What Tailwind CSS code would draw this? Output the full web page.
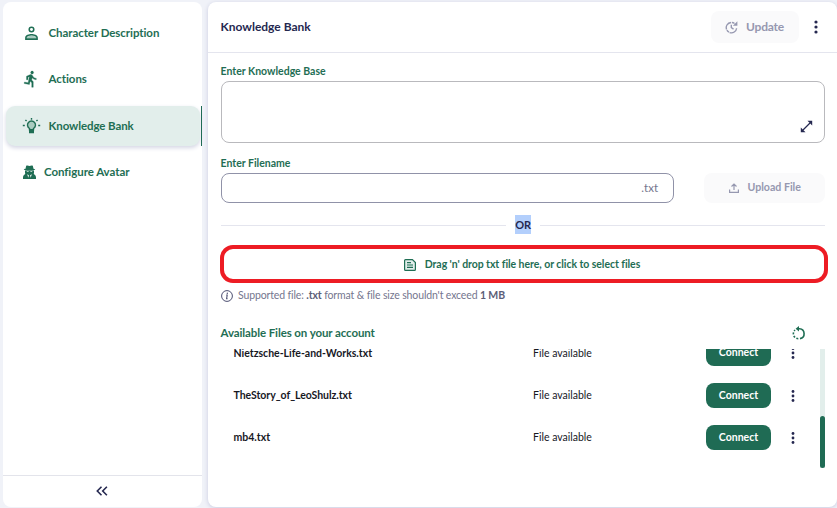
<!DOCTYPE html>
<html lang="en">
<head>
<meta charset="utf-8">
<title>Knowledge Bank</title>
<script src="https://cdn.jsdelivr.net/npm/@tailwindcss/browser@4"></script>
</head>
<body class="w-[837px] h-[508px] overflow-hidden bg-[#f0f2f8] font-['Lato',sans-serif] text-[#252850]">
<div class="flex h-[507px] gap-[6px] pt-[2px] pl-[3px]">
  <aside class="flex w-[199px] shrink-0 flex-col rounded-[8px] bg-white text-[11.5px] font-bold tracking-[-0.06px] text-[#1f6e54]">
    <nav class="flex flex-1 flex-col pt-[11px]">
      <a class="flex h-[40px] items-center pl-[20px]">
        <svg class="mr-[8.500px] size-[17px]" viewBox="0 0 24 24"><path fill="#a9cbbf" d="M5 18c0-2 4-3 7-3s7 1 7 3v1H5z"/><path fill="currentColor" d="M12 4.2a2 2 0 1 1 0 4.2 2 2 0 0 1 0-4.2M12 2a4.3 4.3 0 1 0 0 8.6A4.3 4.3 0 0 0 12 2m0 10.7c-3.3 0-9 1.5-9 5.2V21h18v-3.100c0-3.700-5.700-5.200-9-5.200m0 2.200c3 0 6.500 1.300 6.800 3.100v.8H5.200V18c.3-1.800 3.800-3.100 6.800-3.100"/></svg>Character Description</a>
      <a class="mt-[6px] flex h-[40px] items-center pl-[19px]">
        <svg class="mr-[8.500px] size-[18px]" viewBox="0 0 24 24" fill="currentColor" stroke="currentColor" stroke-width=".4"><path d="M13.49 5.48c1.1 0 2-.9 2-2s-.9-2-2-2-2 .9-2 2 .9 2 2 2zm-3.6 13.9l1-4.4 2.1 2v6h2v-7.500l-2.100-2 .6-3c1.300 1.500 3.300 2.500 5.500 2.500v-2c-1.900 0-3.500-1-4.300-2.400l-1-1.600c-.4-.6-1-1-1.700-1-.3 0-.5.1-.8.1l-5.200 2.200v4.700h2v-3.400l1.800-.7-1.600 8.100-4.900-1-.4 2 7 1.400z"/></svg>Actions</a>
      <div class="mt-[7px] flex h-[40px] justify-between">
        <a class="ml-[3px] flex w-[194px] items-center rounded-[9px] bg-[#e2eeeb] pl-[16px] shadow-[0_2px_4px_#d4d6e4]">
          <svg class="mr-[7.500px] size-[19px]" viewBox="0 0 19 19" fill="none" stroke="currentColor" stroke-width="1.400"><path fill="#a9cbbf" d="M7.500 12.800v-1.300a4 4 0 1 1 4 0v1.300z"/><path fill="currentColor" d="M7.700 13.500h3.600v2H7.700z"/><path d="M9.500 1v1.700M3.400 2.900l1.200 1.200M15.600 2.900l-1.200 1.200M.8 8.500h2M16.200 8.500h2"/></svg><span class="tracking-[-0.1px]">Knowledge Bank</span></a>
        <i class="w-[1px] bg-[#1f6b56]"></i>
      </div>
      <a class="mt-[6px] flex h-[40px] items-center pl-[20px]">
        <svg class="mr-[8px] h-[14px] w-[13px]" viewBox="0 0 13 14" fill="currentColor"><path d="M3.200.8C4.500-.2 5.500.9 6.500.9s2-1.100 3.300-.1l.7 2.900c1 .2 1.700.5 1.700.8 0 .5-2.500 1-5.700 1S.8 5 .8 4.500c0-.3.700-.6 1.700-.8z"/><path fill-rule="evenodd" d="M2 5.400h9v2.200c0 .5-.1.900-.3 1.300C12.300 9.600 13 11 13 12.600V14H0v-1.400c0-1.600.7-3 2.300-3.700-.2-.4-.3-.8-.3-1.300zM3.800 6.300v.7l1.800.1.300-.5zM9.200 6.300v.7l-1.800.1-.3-.5zM4.200 9.200l1.100 3.500.6-2.500zM8.800 9.200l-1.100 3.500-.6-2.500z"/></svg>Configure Avatar</a>
    </nav>
    <button class="flex h-[32px] items-center justify-center border-t border-[#e3e4eb] pr-[1px] pb-[1px] text-[#252850]">
      <svg class="h-[10px] w-[12px]" viewBox="0 0 12 10" fill="none" stroke="currentColor" stroke-width="1.600"><path d="M5.500.8 1.300 5l4.200 4.200M10.900.8 6.700 5l4.200 4.200"/></svg>
    </button>
  </aside>

  <main class="flex w-[629px] shrink-0 flex-col rounded-[8px] bg-white shadow-[0_1px_4px_#c9cbe0]">
    <header class="flex h-[51px] shrink-0 items-center border-b border-[#e4e5ee] pr-[19px] pl-[12.500px]">
      <h1 class="flex-1 pb-[1px] text-[12px] font-bold">Knowledge Bank</h1>
      <button class="flex h-[32px] w-[88px] items-center rounded-[8px] bg-[#fafafb] pl-[14px] text-[12px] font-bold tracking-[-0.2px] text-[#9698b0]">
        <svg class="mr-[8px] size-[13px]" viewBox="0 0 14 14" fill="none" stroke="currentColor" stroke-width="1.500"><path d="M12.500 7.800A5.600 5.600 0 1 1 10.700 3" stroke-dasharray="10 .8 3 .8"/><path d="M13.300.4v4.800H8.500z" fill="currentColor" stroke="none"/><path d="M6.800 4v3.200l2.400 1.500"/></svg>Update</button>
      <svg class="ml-[15px] h-[14px] w-[4px]" viewBox="0 0 4 14" fill="currentColor"><circle cx="2" cy="2" r="1.600"/><circle cx="2" cy="7" r="1.600"/><circle cx="2" cy="12" r="1.600"/></svg>
    </header>

    <section class="flex flex-col pl-[13px]">
      <label class="mt-[11px] -ml-[0.500px] h-[17px] text-[10.500px] leading-[15px] font-bold text-[#1f6e54]">Enter Knowledge Base</label>
      <div class="flex h-[62px] w-[604px] items-end justify-end rounded-[8px] border border-[#b9b9bd] pr-[11px] pb-[9px]">
        <svg class="size-[13px]" viewBox="0 0 13 13"><path d="M3 10l7-7" stroke="currentColor" stroke-width="1.300"/><path fill="currentColor" d="M7.500.8h4.700v4.700zM.8 7.500v4.700h4.700z"/></svg>
      </div>
      <label class="mt-[12px] -ml-[0.500px] h-[18px] text-[10.500px] leading-[16px] font-bold text-[#1f6e54]">Enter Filename</label>
      <div class="flex w-[604px] justify-between">
        <div class="flex h-[30px] w-[453px] items-center justify-end rounded-[8px] border border-[#9092a8] pr-[15px] text-[11.500px] text-[#74768e]">.txt</div>
        <button class="flex h-[30px] w-[121px] items-center rounded-[8px] bg-[#fafafb] pl-[25px] text-[10.600px] font-bold text-[#9698b0]">
          <svg class="mr-[8.500px] size-[10px]" viewBox="0 0 10 10" fill="none" stroke="currentColor" stroke-width="1.200"><path d="M5 7V1.300M2.500 3.500 5 1l2.500 2.500M.6 6.500v2.900h8.800V6.500"/></svg>Upload File</button>
      </div>
      <div class="mt-[12px] flex h-[20px] w-[604px] items-center">
        <i class="h-[1px] w-[285px] bg-[#e4e5ee]"></i>
        <span class="mb-[1px] ml-[9px] h-[19px] w-[16px] bg-[#b3cffc] text-center text-[11px] leading-[20px] font-bold tracking-[-0.2px]">OR</span>
        <i class="ml-[9px] h-[1px] flex-1 bg-[#e4e5ee]"></i>
      </div>
      <button class="mt-[10px] -ml-[1px] flex h-[38px] w-[608px] items-center justify-center rounded-[13px] border-[4px] border-[#ed1c24] pt-[1px] pr-[4px] text-[10.500px] font-bold tracking-[-0.06px] text-[#1f6e54]">
        <svg class="mr-[9px] size-[12px]" viewBox="0 0 12 12" fill="#e2eeeb" stroke="currentColor" stroke-width="1.200"><path d="M.6 1.500q0-.9.900-.9h6.900l3 3v6.900q0 .9-.9.9h-9q-.9 0-.9-.9z"/><path d="M3 3.600h4M3 6h6M3 8.400h6"/></svg>Drag 'n' drop txt file here, or click to select files</button>
      <p class="mt-[4px] flex h-[17px] items-center text-[10.500px] tracking-[-0.130px] text-[#74768e]">
        <svg class="mr-[5px] size-[12px] text-[#4c4e70]" viewBox="0 0 12 12" fill="none" stroke="currentColor"><circle cx="6" cy="6" r="5.400"/><path d="M5.200 5h1l-.6 3.700h1" stroke-width="1.100"/><circle cx="6.300" cy="3.200" r=".7" fill="currentColor" stroke="none"/></svg>
        <span>Supported file: <b class="text-[#5c5e78]">.txt</b> format &amp; file size shouldn't exceed <b class="text-[#5c5e78]">1 MB</b></span></p>
      <div class="mt-[20px] -ml-[0.500px] flex h-[18px] w-[604px] items-center justify-between pr-[18.500px]">
        <h2 class="text-[11.500px] font-bold tracking-[-0.1px] text-[#1f6e54]">Available Files on your account</h2>
        <svg class="size-[14px] text-[#1f6e54]" viewBox="0 0 14 14" fill="none" stroke="currentColor" stroke-width="1.600"><path d="M5.500 2.700H7.500a5 5 0 0 1 .5 9.900"/><path d="M6.300 12.700A5 5 0 0 1 3 4" stroke-dasharray="2 1.500"/><path d="M7 0v5.600L3.600 2.800z" fill="currentColor" stroke="none"/></svg>
      </div>
      <div class="mt-[7px] flex h-[119px] w-[604px] overflow-hidden">
        <div class="-mt-[9px] flex w-[599px] shrink-0 flex-col gap-[17px] text-[10.500px] text-[#17181f]">
          <div class="flex h-[26px] shrink-0 items-center pl-[12.500px]">
            <span class="w-[299.500px] pt-[1px] font-bold">Nietzsche-Life-and-Works.txt</span><span class="w-[173px] pt-[1px]">File available</span>
            <button class="h-[26px] w-[65px] rounded-[8px] bg-[#1f6b54] font-bold text-white">Connect</button>
            <svg class="ml-[20px] h-[12px] w-[4px] text-[#252850]" viewBox="0 0 4 12" fill="currentColor"><circle cx="2" cy="1.500" r="1.400"/><circle cx="2" cy="6" r="1.400"/><circle cx="2" cy="10.500" r="1.400"/></svg>
          </div>
          <div class="flex h-[25px] shrink-0 items-center pl-[12.500px]">
            <span class="w-[299.500px] font-bold tracking-[-0.04px]">TheStory_of_LeoShulz.txt</span><span class="w-[173px]">File available</span>
            <button class="h-[25px] w-[65px] rounded-[8px] bg-[#1f6b54] font-bold text-white">Connect</button>
            <svg class="ml-[20px] h-[12px] w-[4px] text-[#252850]" viewBox="0 0 4 12" fill="currentColor"><circle cx="2" cy="1.500" r="1.400"/><circle cx="2" cy="6" r="1.400"/><circle cx="2" cy="10.500" r="1.400"/></svg>
          </div>
          <div class="flex h-[25px] shrink-0 items-center pl-[12.500px]">
            <span class="w-[299.500px] font-bold">mb4.txt</span><span class="w-[173px]">File available</span>
            <button class="h-[25px] w-[65px] rounded-[8px] bg-[#1f6b54] font-bold text-white">Connect</button>
            <svg class="ml-[20px] h-[12px] w-[4px] text-[#252850]" viewBox="0 0 4 12" fill="currentColor"><circle cx="2" cy="1.500" r="1.400"/><circle cx="2" cy="6" r="1.400"/><circle cx="2" cy="10.500" r="1.400"/></svg>
          </div>
        </div>
        <div class="flex w-[5px] flex-col justify-end bg-[#e2eeeb]"><i class="h-[52px] rounded-full bg-[#1f6b54]"></i></div>
      </div>
    </section>
  </main>
</div>
</body>
</html>
